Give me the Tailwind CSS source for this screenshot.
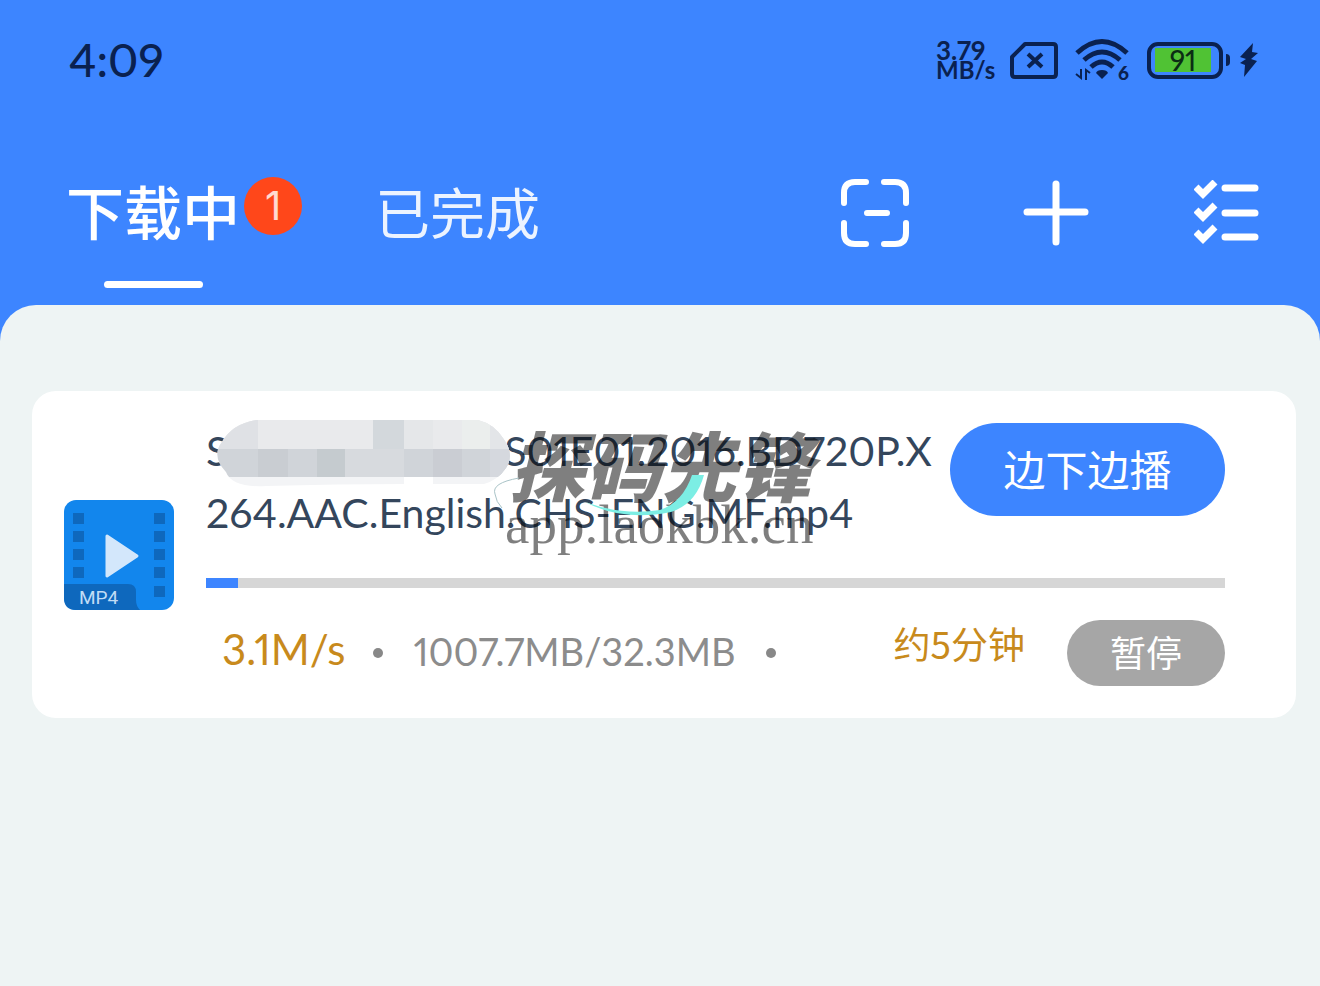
<!DOCTYPE html>
<html lang="zh-CN">
<head>
  <meta charset="utf-8">
  <meta name="viewport" content="width=device-width, initial-scale=1">
  <title>下载中</title>
  <script src="https://cdn.jsdelivr.net/npm/@tailwindcss/browser@4"></script>
</head>
<body class="min-h-screen bg-[#3d85ff] font-['Lato','Noto_Sans_CJK_SC',sans-serif] proportional-nums flex flex-col">

  <header class="pt-8 pb-[17px]">

    <!-- status bar -->
    <div class="flex h-14 items-center justify-between pl-[69px] pr-[60px] text-[#0a2150]">
      <span class="text-[46px] leading-none font-medium">4:09</span>
      <div class="flex items-center">
        <div class="mr-3 w-[61px] font-bold leading-[20px]">
          <div class="text-[26px] leading-[20px]">3.79</div>
          <div class="text-[24px] leading-[20px]">MB/s</div>
        </div>
        <svg class="h-[40px] w-[50px]" viewBox="0 0 50 40" fill="none" stroke="currentColor" stroke-width="4" stroke-linejoin="round">
          <path d="M16 4h28q3 0 3 3v27q0 3-3 3H6q-3 0-3-3V17z"/>
          <path d="M19 14l14 13M33 14L19 27" stroke-width="4"/>
        </svg>
        <svg class="ml-4 h-[44px] w-[56px]" viewBox="0 0 56 44" fill="none" stroke="currentColor" stroke-width="5">
          <path d="M2 15Q27-8 52 15"/>
          <path d="M9 22Q27 6 45 22"/>
          <path d="M16 29Q27 19 38 29"/>
          <path d="M27 32q5 0 6 3l-6 6-6-6q1-3 6-3z" fill="currentColor" stroke="none"/>
          <path d="M1 36l5 4V31M11 42V32l4 3" stroke-width="2"/>
          <text x="43" y="42" font-size="19" font-weight="900" fill="currentColor" stroke="none">6</text>
        </svg>
        <div class="ml-4 flex items-center">
          <div class="flex h-[37px] w-[76px] items-center rounded-[11px] border-4 border-current pl-[4px]">
            <div class="flex h-[24px] w-[56px] items-center justify-center bg-[#50c234] text-[28px] leading-none font-medium text-[#0b2d14]">91</div>
          </div>
          <div class="ml-[3px] h-3 w-1 rounded-r bg-current"></div>
        </div>
        <svg class="ml-2 h-[36px] w-[22px]" viewBox="0 0 22 36" fill="currentColor">
          <path d="M15 1L2 15l6 2-6 4 5 2-1 12 13-16-6-2 7-6-6-1z"/>
        </svg>
      </div>
    </div>

    <!-- tabs and actions -->
    <nav class="mt-[77px] flex items-start justify-between pl-[66px] pr-[60px] text-white">
      <div class="flex gap-[135px]">
        <button type="button" class="relative flex flex-col items-center">
          <span class="flex h-24 items-center text-[58px] leading-none font-medium">下载中</span>
          <span class="mt-5 h-[7px] w-[99px] rounded-full bg-white"></span>
          <span class="absolute left-full top-3 ml-1 flex size-[58px] items-center justify-center rounded-full bg-[#ff471a] text-[40px] leading-none text-white/80 font-['Inter',sans-serif]">1</span>
        </button>
        <button type="button" class="flex h-24 items-center text-[55px] leading-none text-white/90">已完成</button>
      </div>
      <div class="flex h-24 items-center gap-[105px]">
        <button type="button" aria-label="扫描" class="mr-2">
          <svg class="size-[70px]" viewBox="0 0 70 70" fill="none" stroke="currentColor" stroke-width="6" stroke-linecap="round" stroke-linejoin="round">
            <path d="M4 25V15Q4 4 15 4H26M44 4H55Q66 4 66 15V25M66 45V55Q66 66 55 66H44M26 66H15Q4 66 4 55V45M27 35H47"/>
          </svg>
        </button>
        <button type="button" aria-label="添加">
          <svg class="size-[66px]" viewBox="0 0 66 66" fill="none" stroke="currentColor" stroke-width="7" stroke-linecap="round">
            <path d="M33 4V62M4 32H62"/>
          </svg>
        </button>
        <button type="button" aria-label="多选">
          <svg class="size-[66px]" viewBox="0 0 66 66" fill="none" stroke="currentColor" stroke-width="7" stroke-linecap="round">
            <path d="M31 8H61M31 33H61M31 57H61"/>
            <path d="M2 7l7 7L21 2M2 30l7 7L21 25M2 52l7 7L21 47" stroke-linecap="butt"/>
          </svg>
        </button>
      </div>
    </nav>
  </header>

  <main class="flex-1 rounded-t-[36px] bg-[#eef4f4] pl-8 pr-6 pt-[86px]">
    <article class="relative flex items-center rounded-3xl bg-white pl-8 pr-[71px] pt-[29px] pb-8">

      <!-- file type -->
      <svg class="mt-1 size-[110px] shrink-0" viewBox="0 0 110 110" role="img" aria-label="MP4">
        <rect width="110" height="110" rx="12" fill="#1286ed"/>
        <g fill="#0e68bd">
          <path d="M9 13h11v11H9zM9 31h11v11H9zM9 49h11v11H9zM9 67h11v11H9z"/>
          <path d="M90 13h11v11H90zM90 31h11v11H90zM90 49h11v11H90zM90 67h11v11H90zM90 86h11v11H90z"/>
          <path d="M0 84H64Q72 84 72 92V100Q72 106 76 110H12Q0 110 0 98z"/>
        </g>
        <path d="M43 36L73 56 43 76z" fill="#d3e7fb" stroke="#d3e7fb" stroke-width="3" stroke-linejoin="round"/>
        <text x="15" y="104" font-family="Roboto, sans-serif" font-size="19" fill="#c0dcf5">MP4</text>
      </svg>

      <div class="ml-8 min-w-0 flex-1">
        <div class="relative flex items-start justify-between">
          <h2 class="whitespace-nowrap text-[41px] leading-[62px] text-[#34465c]">S<span class="inline-block w-[276px]"></span>S01E01.2016.BD720P.X<br>264.AAC.English.CHS-ENG.MF.mp4</h2>

          <!-- hidden part of the name -->
          <svg class="absolute left-[10px] top-0 h-[67px] w-[295px]" viewBox="0 0 295 67">
            <clipPath id="blob"><path d="M40 0H262Q278 4 287 18Q299 34 290 48Q282 60 268 64H190Q120 64 50 66Q16 68 10 52Q-5 36 6 22Q16 4 40 0z"/></clipPath>
            <g clip-path="url(#blob)">
              <rect width="295" height="67" fill="#f3f4f6"/>
              <rect width="295" height="29" fill="#e9eaec"/>
              <rect width="42" height="29" fill="#dfe1e5"/>
              <rect x="157" width="31" height="29" fill="#d3d8dc"/>
              <rect x="188" width="29" height="29" fill="#e5e7e9"/>
              <rect x="246" width="28" height="29" fill="#ebeeed"/>
              <rect x="274" width="21" height="29" fill="#e3e5e8"/>
              <rect y="29" width="295" height="28" fill="#d0d4d9"/>
              <rect x="42" y="29" width="30" height="28" fill="#c9cdd2"/>
              <rect x="101" y="29" width="28" height="28" fill="#c5cbcf"/>
              <rect x="129" y="29" width="59" height="28" fill="#d7dade"/>
              <rect x="217" y="29" width="29" height="28" fill="#cacdd3"/>
              <rect x="274" y="29" width="21" height="28" fill="#d5d8de"/>
              <rect x="188" y="57" width="29" height="10" fill="#fff"/>
            </g>
          </svg>

          <button type="button" class="mt-[3px] h-[93px] w-[275px] shrink-0 rounded-full bg-[#3d85ff] text-[42px] leading-none text-white">边下边播</button>
        </div>

        <div class="mt-[34px] h-[10px] bg-[#d6d6d6]" role="progressbar" aria-label="下载进度" aria-valuenow="3" aria-valuemin="0" aria-valuemax="100">
          <div class="h-full bg-[#3d85ff]" style="width: 3.1%"></div>
        </div>

        <div class="mt-8 flex h-[66px] items-center pl-4">
          <span class="pb-2 text-[42px] leading-none text-[#c88a1c]">3.1M/s</span>
          <span class="ml-7 size-[10px] rounded-full bg-[#888]"></span>
          <span class="ml-[30px] pb-1 text-[38px] leading-none text-[#8c8c8c]">1007.7MB/32.3MB</span>
          <span class="ml-[30px] size-[10px] rounded-full bg-[#888]"></span>
          <span class="ml-auto pb-5 text-[37px] leading-none text-[#c88a1c] font-['Noto_Sans_CJK_SC',sans-serif]">约5分钟</span>
          <button type="button" class="ml-[42px] h-[66px] w-[158px] rounded-full bg-[#a6a6a6] text-[36px] leading-none text-white">暂停</button>
        </div>
      </div>

      <!-- watermark -->
      <div class="pointer-events-none absolute left-[473px] top-[25px] w-[360px] text-black/50">
        <div class="pl-1 text-[76px] leading-[94px] font-black italic whitespace-nowrap font-['Noto_Sans_CJK_SC',sans-serif]">探码先锋</div>
        <div class="absolute left-0 top-[79px] text-[55px] leading-[60px] font-['Liberation_Serif',serif]">app.laokbk.cn</div>
        <svg class="absolute -left-3 top-[54px] h-[50px] w-[230px]" viewBox="0 0 230 50">
          <path d="M26 8Q-2 13 2 24Q3 32 9 38" fill="none" stroke="#a9c3c7"/>
          <path d="M92 32Q130 46 167 40Q190 32 199 5H211Q203 34 178 42Q130 52 92 32z" fill="#7ceee4"/>
        </svg>
      </div>
    </article>
  </main>

</body>
</html>
